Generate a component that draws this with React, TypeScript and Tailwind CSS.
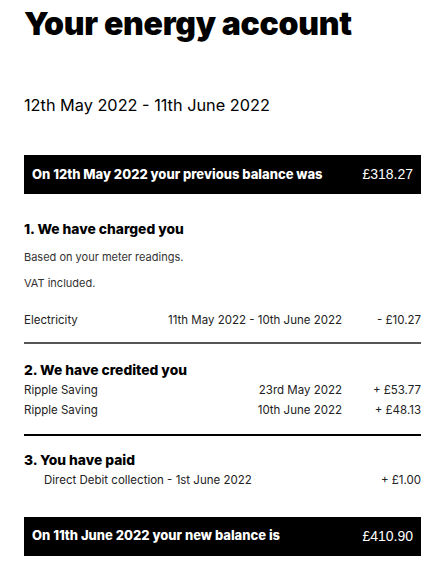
const font = { fontFamily: "Inter, 'Noto Sans', sans-serif" };

function BalanceBar({ label, amount }: { label: string; amount: string }) {
  return (
    <div className="flex h-[39px] items-center justify-between bg-black pl-2 pr-2 text-white">
      <span className="text-[13px] font-extrabold">{label}</span>
      <span className="font-['Liberation_Sans',Arial,sans-serif] text-[14px]">{amount}</span>
    </div>
  );
}

function Row({ name, date, amount }: { name: string; date: string; amount: string }) {
  return (
    <div className="flex items-center text-[11.5px] leading-[14px] text-[#222]">
      <span className="flex-1">{name}</span>
      <span className="w-[180px] text-right">{date}</span>
      <span className="w-[79px] text-right">{amount}</span>
    </div>
  );
}

export default function App() {
  return (
    <div className="min-h-[571px] bg-white pl-6 pr-[13px] text-black" style={font}>
      <h1 className="pt-[4px] text-[32px] font-black leading-[40px] tracking-[-0.3px]">
        Your energy account
      </h1>
      <div className="mt-[50px] text-[16.3px] leading-[22px]">12th May 2022 - 11th June 2022</div>

      <div className="mt-[39px]">
        <BalanceBar label="On 12th May 2022 your previous balance was" amount="£318.27" />
      </div>

      <h2 className="mt-[26px] text-[13.8px] font-extrabold leading-[18px]">1. We have charged you</h2>
      <p className="mt-[12px] text-[11px] leading-[14px] text-[#333]">Based on your meter readings.</p>
      <p className="mt-[12px] text-[11px] leading-[14px] text-[#333]">VAT included.</p>
      <div className="mt-[23px]">
        <Row name="Electricity" date="11th May 2022 - 10th June 2022" amount="- £10.27" />
      </div>
      <div className="mt-[15px] h-[2px] bg-[#555]" />

      <h2 className="mt-[17px] text-[13.8px] font-extrabold leading-[18px]">2. We have credited you</h2>
      <div className="mt-[4px] flex flex-col gap-[6px]">
        <Row name="Ripple Saving" date="23rd May 2022" amount="+ £53.77" />
        <Row name="Ripple Saving" date="10th June 2022" amount="+ £48.13" />
      </div>
      <div className="mt-[17px] h-[1.5px] bg-black" />

      <h2 className="mt-[15px] text-[13.8px] font-extrabold leading-[18px]">3. You have paid</h2>
      <div className="mt-[4px] flex items-center pl-5 text-[11.5px] leading-[14px] text-[#222]">
        <span className="flex-1">Direct Debit collection - 1st June 2022</span>
        <span>+ £1.00</span>
      </div>

      <div className="mt-[30px]">
        <BalanceBar label="On 11th June 2022 your new balance is" amount="£410.90" />
      </div>
    </div>
  );
}
